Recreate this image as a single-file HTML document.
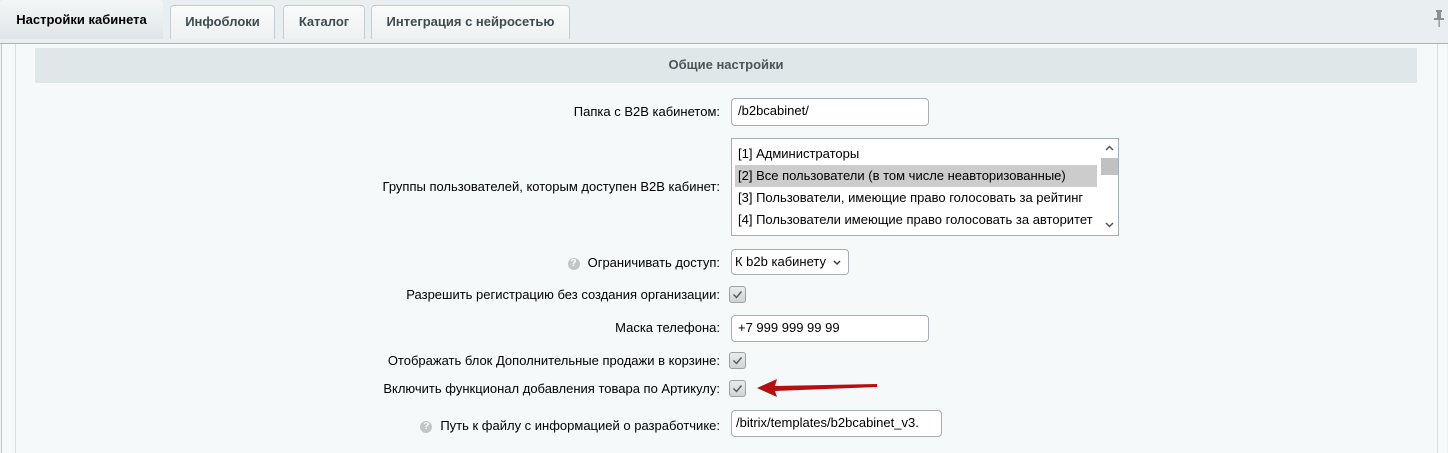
<!DOCTYPE html>
<html><head><meta charset="utf-8"><style>
*{box-sizing:border-box;margin:0;padding:0}
body{width:1448px;height:453px;overflow:hidden;background:#eef2f3;font-family:"Liberation Sans",Arial,sans-serif;font-size:13px;color:#000;position:relative}
.tabbar{position:absolute;left:0;top:0;width:1448px;height:44px;background:#e9eef0;border-bottom:1px solid #a9b1b3}
.tab{position:absolute;top:5px;height:34px;border:1px solid #c6cdd0;border-bottom:none;border-radius:4px 4px 0 0;background:linear-gradient(#fafbfb,#eef1f2);font-weight:bold;color:#3f4b4f;line-height:32px;text-align:center;font-size:13px}
.tab.act{top:0;height:39px;background:linear-gradient(#f4f6f7,#dfe6e8);color:#000;border:none;line-height:40px;left:0;width:163px}
.content{position:absolute;left:1px;top:44px;width:1446px;height:409px;background:#f5f9f9;border-left:1px solid #c2cacc}
.inner{position:absolute;left:13px;top:0;width:1423px;height:409px;border-left:1px solid #d4e0e3;border-right:1px solid #d4e0e3}
.band{position:absolute;left:35px;top:48px;width:1382px;height:35px;background:#e0e7e8;text-align:center;font-weight:bold;color:#4a5558;line-height:33px}
.lbl{position:absolute;right:728px;color:#000;white-space:nowrap}
.inp{position:absolute;left:731px;background:#fff;border:1px solid #a6aeb1;border-radius:4px;padding-left:6px;line-height:24px}
.cb{position:absolute;left:729px;width:17px;height:17px;border:1px solid #9aa2a5;border-radius:3px;background:linear-gradient(#e9ecec,#cfd4d5)}
.q{display:inline-block;width:12px;height:12px;border-radius:50%;background:#c2c6c8;color:#fff;font-size:10px;line-height:12px;text-align:center;font-weight:bold;margin-right:8px;vertical-align:1px}
.list{position:absolute;left:731px;top:138px;width:388px;height:98px;background:#fff;border:1px solid #a6aeb1}
.list div{height:22px;line-height:22px;padding-left:3px;margin-left:3px;width:362px}
</style></head><body>
<div class="tabbar">
 <div class="tab act">Настройки кабинета</div>
 <div class="tab" style="left:170px;width:105px">Инфоблоки</div>
 <div class="tab" style="left:283px;width:82px">Каталог</div>
 <div class="tab" style="left:371px;width:199px">Интеграция с нейросетью</div>
 <svg style="position:absolute;left:1433px;top:10px" width="12" height="18" viewBox="0 0 12 18"><rect x="3" y="0" width="6" height="2" fill="#8a9194"/><rect x="4" y="2" width="4" height="6" fill="#8a9194"/><rect x="1" y="8" width="10" height="2" fill="#8a9194"/><rect x="5.5" y="10" width="1.3" height="7" fill="#8a9194"/></svg>
</div>
<div class="content"><div class="inner"></div></div>
<div class="band">Общие настройки</div>

<div class="lbl" style="top:104px">Папка с B2B кабинетом:</div>
<div class="inp" style="top:98px;width:198px;height:28px">/b2bcabinet/</div>

<div class="lbl" style="top:179px">Группы пользователей, которым доступен B2B кабинет:</div>
<div class="list">
 <div style="margin-top:4px">[1] Администраторы</div>
 <div style="background:#cccccc">[2] Все пользователи (в том числе неавторизованные)</div>
 <div>[3] Пользователи, имеющие право голосовать за рейтинг</div>
 <div>[4] Пользователи имеющие право голосовать за авторитет</div>
 <svg style="position:absolute;right:0;top:0" width="17" height="96"><rect x="0" y="19" width="17" height="17" fill="#c1c1c1"/><path d="M5 11l3.5-3.5L12 11" stroke="#555" stroke-width="1.5" fill="none"/><path d="M5 84l3.5 3.5L12 84" stroke="#555" stroke-width="1.5" fill="none"/></svg>
</div>

<div class="lbl" style="top:255px"><span class="q">?</span>Ограничивать доступ:</div>
<div class="inp" style="top:249px;width:118px;height:26px;padding-left:3px">К b2b кабинету <svg style="position:absolute;right:7px;top:10px" width="8" height="6"><path d="M1 1l3 3 3-3" stroke="#333" stroke-width="1.4" fill="none"/></svg></div>

<div class="lbl" style="top:287px">Разрешить регистрацию без создания организации:</div>
<div class="cb" style="top:286px"><svg width="15" height="15"><path d="M3.5 7.5l3 3 5-6" stroke="#555" stroke-width="1.4" fill="none"/></svg></div>

<div class="lbl" style="top:320px">Маска телефона:</div>
<div class="inp" style="top:315px;width:198px;height:27px">+7 999 999 99 99</div>

<div class="lbl" style="top:353px">Отображать блок Дополнительные продажи в корзине:</div>
<div class="cb" style="top:352px"><svg width="15" height="15"><path d="M3.5 7.5l3 3 5-6" stroke="#555" stroke-width="1.4" fill="none"/></svg></div>

<div class="lbl" style="top:381px">Включить функционал добавления товара по Артикулу:</div>
<div class="cb" style="top:380px"><svg width="15" height="15"><path d="M3.5 7.5l3 3 5-6" stroke="#555" stroke-width="1.4" fill="none"/></svg></div>
<svg style="position:absolute;left:755px;top:376px" width="125" height="24"><path d="M2 12L22 3 20 10 122 8 122 11 20 15 22 21Z" fill="#b50f0f"/></svg>

<div class="lbl" style="top:418px"><span class="q">?</span>Путь к файлу с информацией о разработчике:</div>
<div class="inp" style="top:410px;width:211px;height:27px;padding-left:4px;overflow:hidden;white-space:nowrap">/bitrix/templates/b2bcabinet_v3.</div>
</body></html>
